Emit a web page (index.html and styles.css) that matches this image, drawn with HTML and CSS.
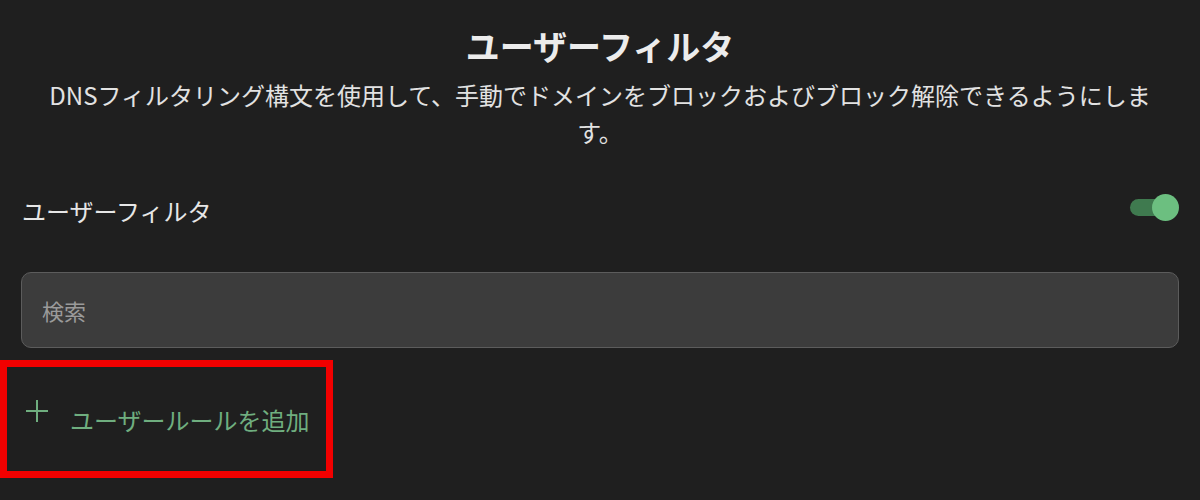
FILE: index.html
```html
<!DOCTYPE html>
<html lang="ja">
<head>
    <meta charset="UTF-8">
    <title>ユーザーフィルタ</title>
    <link rel="stylesheet" href="styles.css">
</head>
<body>
    <div class="header">
        <h1>ユーザーフィルタ</h1>
        <p class="desc">DNSフィルタリング構文を使用して、手動でドメインをブロックおよびブロック解除できるようにします。</p>
    </div>

    <div class="setting-row">
        <span class="setting-label">ユーザーフィルタ</span>
        <span class="switch on"><span class="switch-thumb"></span></span>
    </div>

    <div class="search-box">
        <input type="text" placeholder="検索">
    </div>

    <div class="add-rule">
        <svg class="plus-icon" width="24" height="24" viewBox="0 0 24 24">
            <path d="M12 1v22M1 12h22" stroke="#6fae7f" stroke-width="2" fill="none"/>
        </svg>
        <span class="add-text">ユーザールールを追加</span>
    </div>
</body>
</html>
```

FILE: styles.css
```css
body {
    margin: 0;
    padding: 0;
    background-color: #1f1f1f;
    font-family: "Noto Sans CJK JP", "Noto Sans", sans-serif;
    color: #e6e6e6;
}

/* header */
.header {
    padding: 24px 40px 0;
    text-align: center;
}

h1 {
    margin: 0;
    font-size: 34px;
    line-height: 44px;
    font-weight: 700;
    color: #ececec;
}

.desc {
    margin: 8px 0 0;
    font-size: 24px;
    line-height: 37px;
    color: #e2e2e2;
}

/* toggle row */
.setting-row {
    display: flex;
    justify-content: space-between;
    align-items: center;
    height: 60px;
    margin-top: 30px;
    padding: 0 21px 0 22px;
}

.setting-label {
    font-size: 24px;
    color: #e6e6e6;
}

.switch {
    position: relative;
    width: 43px;
    height: 17px;
    margin-right: 6px;
    margin-bottom: 6px;
    border-radius: 9px;
    background-color: #3f7a4f;
}

.switch-thumb {
    position: absolute;
    top: -5px;
    right: -6px;
    width: 27px;
    height: 27px;
    border-radius: 50%;
    background-color: #6cbf80;
}

/* search */
.search-box {
    margin: 32px 21px 0 21px;
}

.search-box input {
    box-sizing: border-box;
    width: 100%;
    height: 76px;
    padding: 0 20px;
    border: 1px solid #5c5c5c;
    border-radius: 10px;
    background-color: #3c3c3c;
    font-family: inherit;
    font-size: 22px;
    color: #e6e6e6;
    outline: none;
}

.search-box input::placeholder {
    color: #9a9a9a;
}

/* add rule button, highlighted */
.add-rule {
    display: flex;
    align-items: center;
    box-sizing: border-box;
    width: 333px;
    height: 118px;
    margin-top: 12px;
    padding: 0 0 0 18px;
    border: 7px solid #f20000;
}

.plus-icon {
    margin-top: -16px;
}

.add-text {
    margin-left: 21px;
    font-size: 24px;
    color: #6fae7f;
}
```
